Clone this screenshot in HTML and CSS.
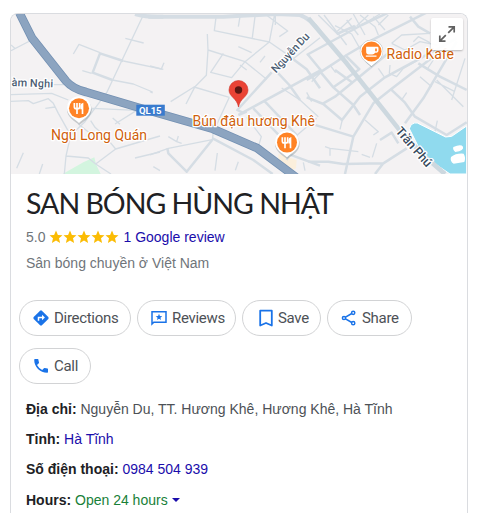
FILE: index.html
```html
<!DOCTYPE html>
<html lang="vi">
<head>
<meta charset="utf-8">
<title>SAN BÓNG HÙNG NHẬT</title>
<link rel="stylesheet" href="styles.css">
</head>
<body>
<main class="card">
  <div class="map">
    <svg class="map-art" viewBox="11 14 456 160" width="456" height="160">
      <defs>
        <g id="fork">
          <path d="M0 45C-14 35-37 22-37 0A37 37 0 0 1 37 0C37 22 14 35 0 45Z" fill="#8d969c" opacity=".45" transform="translate(1 4)"/>
          <path d="M0 44C-12 33-36 22-36 0A36 36 0 0 1 36 0C36 22 12 33 0 44Z" fill="#fff"/>
          <circle r="30" fill="#ff8326"/>
          <path d="M-14-16V-5Q-14 1-9 1H-3Q2 1 2-5V-16M-6-16V17" fill="none" stroke="#fff" stroke-width="5"/>
          <path d="M13-17V17H8V3H4V-8Q5-16 13-17Z" fill="#fff"/>
        </g>
      </defs>
      <rect x="11" y="14" width="456" height="160" fill="#f4f2f3"/>
      <g transform="scale(.33333)" class="roads">
        <path class="park" d="M188 522L250 487L283 472L288 493L302 522Z"/>
        <path d="M430 45L320 278L255 365L212 406L198 468L193 522M376 115L431 129M220 162L237 133L300 158M370 183L490 208M247 212L275 220M337 240L400 252L458 276M33 152L95 120M33 135L46 146M160 254H195M33 284L155 280L205 300M33 304L85 302L100 311L145 296L160 310L175 340L212 406M136 325L165 321M255 365L277 325L410 331L345 372M338 354L360 373M272 362L285 382L318 412L347 447L480 408M347 447L287 492L333 522M198 468L265 474L287 492M405 474L480 456M460 500L480 512M70 458L50 505M128 492L118 522M235 372L270 400"/>
        <path class="mid" d="M370 183L300 160L278 218L337 240"/>
        <path class="wide" d="M405 42Q440 52 490 50"/>
      </g>
      <g transform="translate(150) scale(.33333)" class="roads">
        <path class="beige" d="M385 462L440 480L438 505L412 518L385 485Z"/>
        <path class="wide" d="M-5 50H220L380 42L450 45Q480 55 510 95"/>
        <path d="M198 52L193 92L358 126L374 42M270 50L265 80M315 50L307 113M376 43V75M358 126L430 176L510 113M345 42L413 93L388 110M358 126L285 185L245 233L182 217L220 160M172 102L174 150L169 226L135 260L108 312M62 305L132 261L238 292M174 150L285 185L350 238M265 140L305 158M270 195L290 210M345 168L330 187M0 198L34 207L42 188M0 275L8 279M505 350L450 300L395 264M470 277L485 305M238 292L188 400M290 352L334 410L325 440M55 410L80 425L95 430M80 425L85 408M0 465L55 445L187 419L190 398M202 459L195 512M265 485L256 511M460 487L465 512M500 355L442 405"/>
        <path class="mid" d="M365 217L262 330L278 338L510 212M380 215L418 255L450 300M265 345L290 335M310 325L410 430M345 305L440 405L410 480M420 170L470 208L510 265M188 415L310 480L368 522M187 419L110 515L55 460L52 445M410 460L510 497"/>
      </g>
      <g transform="translate(310) scale(.33333)" class="roads">
        <path d="M25 45L82 102L138 78M42 45L110 135M80 95L125 55M75 77L125 102L155 155M110 60L145 105M130 42L165 105M150 45L195 80L205 105M175 45L140 78M210 42L155 75M235 45L205 75M190 50L225 90M245 130L285 150L330 125L380 135M310 125L325 110L360 128M245 130L275 105L360 100M390 150L350 210M465 175L425 300M375 245L435 275M330 230L365 260M60 195L77 218M35 215L5 245M205 205L222 230M240 195L238 220L260 230L280 205L325 180M165 360L205 395L190 405M200 430L187 472M375 395L382 362M275 300L290 278M45 440L60 445V467M60 445L145 455M155 463L180 472M90 388L98 355M380 240L460 320"/>
        <path class="mid" d="M-10 165L155 75L360 -20M-10 240L35 214L110 165L190 118L355 35M30 214L70 262L130 315L150 345M35 214L-5 165M-10 292L40 312L96 360L150 290L225 232L340 170L440 115M130 245L75 290L40 310M130 245L240 155M70 262L145 210M75 210L130 250M105 165L150 210M0 370L130 410L190 310L243 268L325 205L370 170M130 410L105 522M243 268L285 308L315 350L410 405L470 367M285 370L340 295L440 125M325 190L390 230L470 270M210 420L245 398L265 430M220 490L290 445M-5 485L55 485L100 492L220 490L195 522M300 50L325 80L360 100M80 102L135 78"/>
        <path class="lake" d="M298 386Q304 366 322 369L407 411L425 409L470 378V522H420L370 488L325 440Z"/>
        <path class="islet" d="M430 441Q453 431 459 440Q463 452 436 456Q427 449 430 441M423 471Q438 459 461 461Q468 473 463 486L431 491Q419 484 423 471"/>
        <path class="avenue" d="M-5 55L110 190L270 392L345 470L405 522"/>
      </g>
      <g fill="none" stroke-linejoin="round">
        <path d="M18 10L32 38L66 81Q73 89 86 92L140 108L213 129L257 148L297 178" stroke="#7390b2" stroke-width="8.500"/>
        <path d="M18 10L32 38L66 81Q73 89 86 92L140 108L213 129L257 148L297 178" stroke="#8ca4c0" stroke-width="7"/>
      </g>
      <rect x="136.300" y="104.700" width="28.500" height="11" fill="#397bce"/>
      <text x="139" y="113.500" class="route" textLength="22.500">QL15</text>
      <use href="#fork" transform="translate(79 108.300) scale(.33333)"/>
      <use href="#fork" transform="translate(287 142.600) scale(.33333)"/>
      <g transform="translate(371.500 51.500) scale(.33333)">
        <path d="M0 48C-12 35-35 22-35 0A35 35 0 0 1 35 0C35 22 12 35 0 48Z" fill="#aeb7bb"/>
        <path d="M0 44C-12 33-34 22-34 0A34 34 0 0 1 34 0C34 22 12 33 0 44Z" fill="#fff"/>
        <circle r="30" fill="#ff8326"/>
        <path d="M-16-14H18Q21-14 21-10V-3Q21 4 11 4Q8 9 2 9H-8Q-16 9-16 1ZM11-9V-1H16V-9ZM-17 12H15V16H-17Z" fill="#fff" fill-rule="evenodd"/>
      </g>
      <text x="51" y="139.500" class="poi" textLength="96">Ngũ Long Quán</text>
      <text x="192.500" y="125.500" class="poi" textLength="122.500">Bún đậu hương Khê</text>
      <text x="386.500" y="58.500" class="poi" textLength="67.500">Radio Kafe</text>
      <text x="11.500" y="86" class="street" textLength="41.500" transform="rotate(2 11 86)">àm Nghi</text>
      <text class="street" textLength="50" transform="translate(276 73.500) rotate(-47)">Nguyễn Du</text>
      <text class="street dark" textLength="48" transform="translate(395 131.500) rotate(49)">Trần Phú</text>
      <path d="M238.500 107C237 98 229 97 229 90A9.500 9.500 0 0 1 248 90C248 97 240 98 238.500 107Z" fill="#ea4335" stroke="#cf3026" stroke-width=".6"/>
      <circle cx="238.500" cy="90" r="3.700" fill="#5d1712"/>
    </svg>
    <button class="expand" aria-label="Expand map">
      <svg width="18" height="18" viewBox="0 0 18 18" fill="none" stroke="#616161" stroke-width="1.700"><path d="M10.500 1.800H16.200V7.500M16.200 1.800L10.200 7.800M1.800 10.500V16.200H7.500M1.800 16.200L7.800 10.200"/></svg>
    </button>
  </div>
  <h1 class="title">SAN BÓNG HÙNG NHẬT</h1>
  <div class="rating">
    <span>5.0</span>
    <svg class="stars" width="70" height="14" viewBox="0 0 70 14" fill="#fbbc04">
      <defs><path id="star" d="M7 .5L8.900 4.900L13.500 5.200L10 8.300L11.100 12.900L7 10.500L2.900 12.900L4 8.300L.5 5.200L5.100 4.900Z"/></defs>
      <use href="#star"/><use href="#star" x="14"/><use href="#star" x="28"/><use href="#star" x="42"/><use href="#star" x="56"/>
    </svg>
    <a>1 Google review</a>
  </div>
  <div class="category">Sân bóng chuyền ở Việt Nam</div>
  <div class="actions">
    <button class="pill directions"><svg width="16" height="16" viewBox="0 0 16 16"><path d="M7.100.7Q8 0 8.900.7L15.300 7.100Q16 8 15.300 8.900L8.900 15.300Q8 16 7.100 15.300L.7 8.900Q0 8 .7 7.100Z" fill="#1a73e8"/><path d="M5.500 10.800V7.500H10" fill="none" stroke="#fff" stroke-width="1.500"/><path d="M9 4.700L11.900 7.500L9 10.300Z" fill="#fff"/></svg><span>Directions</span></button>
    <button class="pill reviews"><svg width="16" height="16" viewBox="0 0 16 16"><path d="M1 14V1.800H15V12.200H2.800Z" fill="none" stroke="#1a73e8" stroke-width="1.500"/><path d="M8 3.800L8.900 6.100L11.300 6.200L9.400 7.700L10.100 10.100L8 8.700L5.900 10.100L6.600 7.700L4.700 6.200L7.100 6.100Z" fill="#1a73e8"/></svg><span>Reviews</span></button>
    <button class="pill save"><svg width="14" height="18" viewBox="0 0 14 18"><path d="M1.200 1.700H12.800V16.500L7 14L1.200 16.500Z" fill="none" stroke="#1a73e8" stroke-width="1.800" stroke-linejoin="round"/></svg><span>Save</span></button>
    <button class="pill share"><svg width="16" height="16" viewBox="0 0 16 16" fill="none" stroke="#1a73e8" stroke-width="1.500"><path d="M4.500 7.200L10.800 3.500M4.500 8.800L10.800 12.500"/><circle cx="3" cy="8" r="1.600"/><circle cx="12.200" cy="2.800" r="1.600"/><circle cx="12.200" cy="13.200" r="1.600"/></svg><span>Share</span></button>
    <button class="pill call"><svg width="16" height="16" viewBox="0 0 16 16"><path d="M2 1H4.800Q5.300 1 5.400 1.600Q5.500 3.200 6 4.300Q6.100 4.800 5.800 5.200L4 6.900Q6 10.400 9.200 12.100L10.900 10.300Q11.300 9.900 11.800 10.100Q13 10.500 14.500 10.600Q15 10.700 15 11.300V14Q15 14.800 14.300 14.800C7 14.800 1.200 9 1.200 1.800Q1.200 1 2 1Z" fill="#1a73e8"/></svg><span>Call</span></button>
  </div>
  <div class="facts">
    <div><b>Địa chỉ:</b> Nguyễn Du, TT. Hương Khê, Hương Khê, Hà Tĩnh</div>
    <div><b>Tỉnh:</b> <a>Hà Tĩnh</a></div>
    <div><b>Số điện thoại:</b> <a>0984 504 939</a></div>
    <div class="hours"><b>Hours:</b> <span class="open">Open 24 hours</span><i class="caret"></i></div>
  </div>
</main>
</body>
</html>
```
FILE: styles.css
```css
* { box-sizing: border-box; }
body {
  margin: 0;
  padding: 13px 0 0 10px;
  background: #fff;
  color: #4d5156;
  font: 14px/20px "Liberation Sans", Arial, sans-serif;
}
.card {
  width: 458px;
  height: 500px;
  border: 1px solid #dadce0;
  border-bottom: 0;
  border-radius: 8px 8px 0 0;
  overflow: hidden;
}
.map { position: relative; height: 160px; }
.map-art { display: block; }
.roads path { fill: none; stroke: #d5dde4; stroke-width: 4; stroke-linejoin: round; }
.roads .mid { stroke-width: 7.500; }
.roads .wide { stroke-width: 12; }
.roads .avenue { stroke-width: 14; stroke: #cdd8df; }
.roads .park { fill: #d3f5df; stroke: none; }
.roads .beige { fill: #fbefdc; stroke: none; }
.roads .lake { fill: #90daee; stroke: #fff; stroke-width: 3; }
.roads .islet { fill: #fff; stroke: none; }
.route { font: 700 9.500px Roboto, sans-serif; fill: #fff; }
.poi, .street { paint-order: stroke; stroke: #fff; stroke-width: 2.500px; stroke-linejoin: round; }
.poi { font: 14px Roboto, sans-serif; fill: #d05f0c; }
.street { font: 500 11px Roboto, sans-serif; fill: #4b5d73; }
.street.dark { font-size: 12.500px; fill: #35485c; }
.expand {
  position: absolute;
  top: 4px;
  right: 4px;
  width: 32px;
  height: 32px;
  padding: 7px;
  border: 0;
  border-radius: 2px;
  background: rgba(255, 255, 255, .95);
  box-shadow: 0 1px 2px rgba(0, 0, 0, .25);
}
.expand svg { display: block; }
.title {
  margin: 11px 0 0 15px;
  font: 400 28.500px/36px Lato, sans-serif;
  letter-spacing: -1px;
  color: #202124;
  white-space: nowrap;
}
.rating { display: flex; align-items: center; margin: 6px 0 0 15px; color: #70757a; }
.stars { margin: 0 4px 0 4px; }
.category { margin: 6px 0 0 15px; color: #70757a; }
a { color: #1a0dab; }
.actions { display: flex; flex-wrap: wrap; gap: 12px 6px; margin: 27px 40px 0 8px; }
.pill {
  display: flex;
  align-items: center;
  height: 36px;
  padding: 0 0 0 13px;
  border: 1px solid #d2d3d5;
  border-radius: 18px;
  background: #fff;
  color: #4d5156;
  font: 15px/20px Roboto, sans-serif;
  letter-spacing: -.3px;
}
.pill span { margin-left: 5px; }
.directions { width: 112px; }
.reviews { width: 99px; }
.save { width: 79px; padding-left: 16px; }
.share { width: 85px; }
.call { width: 72px; }
.facts { display: grid; gap: 10px; margin: 15px 0 0 15px; }
.facts b { color: #202124; }
.hours { padding-top: 1px; }
.open { color: #188038; }
.caret {
  display: inline-block;
  margin: 0 0 3px 4px;
  border: 4px solid transparent;
  border-top-color: #1a0dab;
  border-bottom: 0;
}
```
